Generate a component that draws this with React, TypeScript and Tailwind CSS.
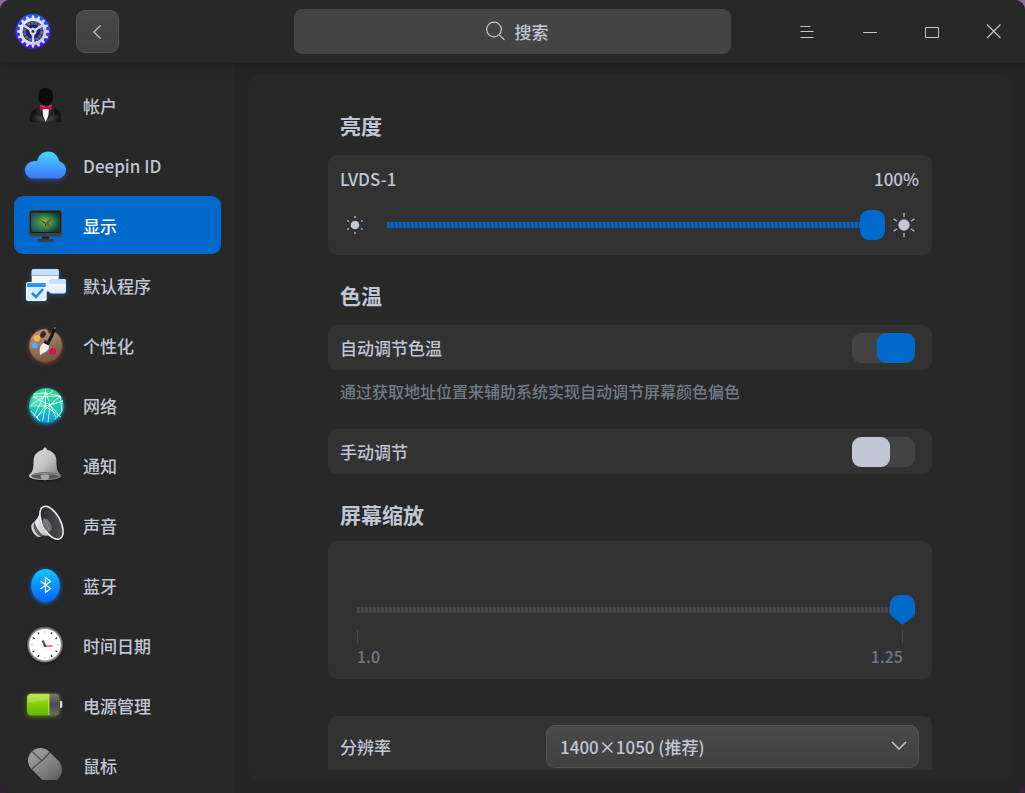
import { useState } from 'react'
import type { ReactNode } from 'react'

/* ---------- Sidebar icons ---------- */

function AccountIcon() {
  return (
    <>
      <defs>
        <radialGradient id="suit" cx="0.5" cy="0.7" r="0.5">
          <stop offset="0" stopColor="#5a5a5a" />
          <stop offset="1" stopColor="#111" />
        </radialGradient>
      </defs>
      <path d="M8 41v-4c0-6 3-9 9-10h14c6 1 8 4 8 10v4z" fill="url(#suit)" />
      <ellipse cx="23.7" cy="15.5" rx="7.5" ry="8.8" fill="#0b0b0b" />
      <path d="M16 26l5 2 2.7 13-9-10zM31 26l-5 2-2.300 13 9-10z" fill="#262626" />
      <path d="M20.500 28h6.500l-.7 7-2.600 6-2.600-6z" fill="#f2f2f2" />
      <path d="M18 24l5 1.500h1.500l5.500-1.500v5l-5.500-1H23l-5 1z" fill="#c2094f" />
      <path d="M18.500 24.500l4 1.200M29.500 24.500l-4 1.200" stroke="#f0568c" strokeWidth="0.8" />
    </>
  )
}

function CloudIcon() {
  return (
    <>
      <defs>
        <linearGradient id="cloud" x1="0" y1="0" x2="0" y2="1">
          <stop offset="0" stopColor="#43d7fb" />
          <stop offset="0.5" stopColor="#43a6ff" />
          <stop offset="1" stopColor="#3d77ff" />
        </linearGradient>
      </defs>
      <path
        d="M12 37.500C6.500 37.500 3 33.500 3 29c0-5 4.500-9 9.500-9 1 0 2 .1 2.600.3C16.500 14.500 20.500 10.500 26 10.500c5.500 0 9.500 3.300 11.200 9.500 4.200 1.500 6.800 4.800 6.800 8.700 0 5-4 8.800-9 8.800z"
        fill="url(#cloud)"
        className="drop-shadow-[0_2px_2px_#2f5fd088]"
      />
    </>
  )
}

function DisplayIcon() {
  return (
    <>
      <defs>
        <radialGradient id="screen" cx="0.45" cy="0.5" r="0.6">
          <stop offset="0" stopColor="#a4c91c" />
          <stop offset="0.4" stopColor="#4a9535" />
          <stop offset="0.8" stopColor="#1c5648" />
          <stop offset="1" stopColor="#153c2a" />
        </radialGradient>
      </defs>
      <path d="M20 34h7v5h-7z" fill="#20282e" />
      <rect x="15" y="38" width="17" height="2.800" rx="1" fill="#3a3d42" />
      <rect x="7" y="9" width="33" height="26.500" rx="3" fill="#3f4145" />
      <rect x="8" y="10" width="31" height="22" rx="2.500" fill="#15201d" />
      <rect x="9" y="11.500" width="29" height="19.500" rx="1.500" fill="url(#screen)" />
      <path d="M9 13c0-1 .5-1.500 1.500-1.500h6L24 31H10.500C9.500 31 9 30.500 9 29.500z" fill="#2a6a70" opacity="0.4" />
      <path d="M18.500 19l5 2.500 6.500-5-3 6 1.500 4-4-3z" fill="#5d5a6c" />
      <path d="M20 20l3 2.500 1 3" stroke="#18321f" strokeWidth="1" fill="none" />
    </>
  )
}

function DefaultAppsIcon() {
  return (
    <>
      <defs>
        <linearGradient id="page" x1="0" y1="0" x2="0" y2="1">
          <stop offset="0" stopColor="#fff" />
          <stop offset="1" stopColor="#dde9fb" />
        </linearGradient>
      </defs>
      <g className="drop-shadow-[0_1px_2px_#1e6fb8aa]">
        <rect x="9.700" y="8" width="27" height="22.500" rx="2" fill="url(#page)" />
        <path d="M9.700 14.500V10c0-1.100.9-2 2-2h23c1.100 0 2 .9 2 2v4.500z" fill="#c4dfff" />
        <path d="M9.700 14.500h27" stroke="#8fa6c0" strokeWidth="0.8" />
        <rect x="27.300" y="18" width="16.700" height="14.500" rx="2" fill="url(#page)" />
        <path d="M27.300 23V20c0-1.100.9-2 2-2H42c1.100 0 2 .9 2 2v3z" fill="#c4dfff" />
        <rect x="4" y="21" width="20.700" height="19" rx="2" fill="#f4f8ff" />
        <rect x="5.300" y="25.700" width="18" height="13" fill="#d9ebff" />
        <path d="M5 22h18.700v4H5z" fill="#2696fb" />
        <path d="M10 32l4 4 7-8" fill="none" stroke="#138bf5" strokeWidth="2.500" />
      </g>
    </>
  )
}

function PaletteIcon() {
  return (
    <>
      <defs>
        <linearGradient id="wood" x1="0.2" y1="0" x2="0.6" y2="1">
          <stop offset="0" stopColor="#b39a83" />
          <stop offset="1" stopColor="#74523f" />
        </linearGradient>
      </defs>
      <path
        d="M23.700 8C14 8 7.200 15.500 7.200 24.500S14.500 41 23.700 41s16.500-7 16.500-16.500c0-6-3-11-7.500-13.700-3-1.300-3.200 2-5.200 1.700C25.500 12 27 8.200 23.700 8z"
        fill="url(#wood)"
        stroke="#8e4527"
        strokeWidth="0.6"
        className="drop-shadow-[0_1px_2px_#b4532a88]"
      />
      <ellipse cx="21" cy="13.500" rx="2.600" ry="3.500" fill="#3d2820" transform="rotate(25 21 13.500)" />
      <circle cx="15" cy="17.300" r="3.200" fill="#f6b73c" />
      <circle cx="12.700" cy="24.500" r="3" fill="#57a8f8" />
      <circle cx="30.700" cy="30.300" r="3.200" fill="#e00a46" />
      <path d="M32 7l1-2 1 2-1 3-5 11-2-1z" fill="#151515" stroke="#151515" strokeWidth="1" />
      <circle cx="32.800" cy="7" r="0.900" fill="#8c8c8c" />
      <path d="M22 21.500l5 3c.5 3-1.500 5.500-4 6.700-2 .9-3 1.300-5 3.300 0-3.500-1-6 .5-9 1-2 2-3 3.500-4z" fill="#f1ede8" />
      <path d="M23 19l5 2.500-1.200 3-5.300-2.500z" fill="#1c1c1c" />
    </>
  )
}

function NetworkIcon() {
  return (
    <>
      <defs>
        <linearGradient id="globe" x1="0" y1="0" x2="0" y2="1">
          <stop offset="0" stopColor="#33dc8c" />
          <stop offset="0.6" stopColor="#1cc5b5" />
          <stop offset="1" stopColor="#0e92e6" />
        </linearGradient>
      </defs>
      <circle cx="24.300" cy="24.500" r="17.200" fill="url(#globe)" className="drop-shadow-[0_1px_2px_#12a0b0]" />
      <path d="M12 13l11-3v15L9 24z" fill="#7fe8c8" opacity="0.5" />
      <path
        d="M23.500 8v17M23.500 12l-12 1M23.500 12l14.500 3M23.500 12L12 35M23.500 12l10 24M11 16l27-1M11 16l17 8 13-4M38 15L15 36M7.500 25h16l17.500-5M15 36l8-11 16 11M23.500 25l-3 15M28 24l-2 17M28 24l8 9M38 15l2 15-7 8M9 30l9 10M31 10L9 24"
        fill="none"
        stroke="#e4fff6"
        strokeWidth="0.9"
        opacity="0.9"
      />
      <g fill="#fff">
        <circle cx="23.500" cy="12" r="1.200" />
        <circle cx="28" cy="24" r="1" />
        <circle cx="15" cy="36" r="1.100" />
        <circle cx="38" cy="16" r="1" />
        <circle cx="23.500" cy="25" r="1" />
      </g>
    </>
  )
}

function BellIcon() {
  return (
    <>
      <defs>
        <linearGradient id="bell" x1="0" y1="0" x2="1" y2="1">
          <stop offset="0" stopColor="#dcdcdc" />
          <stop offset="0.5" stopColor="#c4c4c4" />
          <stop offset="1" stopColor="#6c6c6c" />
        </linearGradient>
      </defs>
      <path
        d="M20.500 9c.8-.8 1.500-2.700 2.500-2.700s1.700 1.900 2.500 2.700c6 1.300 9 5.500 9 11.500 0 6 .5 9 2.500 11.500 1.300 1.300 2 2 2 3 0 2.500-7 4-16 4S7 37.500 7 35c0-1 .7-1.700 2-3 2-2.500 2.500-5.500 2.500-11.500 0-6 3-10.200 9-11.500z"
        fill="url(#bell)"
        className="drop-shadow-[0_1px_1px_#0008]"
      />
      <ellipse cx="23" cy="34.800" rx="14" ry="3.500" fill="#565656" />
      <path d="M9 34.500c2-2.500 26-2.500 28 0" stroke="#a9a9a9" strokeWidth="0.8" fill="none" />
      <path d="M18.500 34.500c0-1.500 9-1.500 9 0 0 3-2 4.700-4.500 4.700s-4.500-1.700-4.500-4.700z" fill="#a6a6a6" />
    </>
  )
}

function SoundIcon() {
  return (
    <>
      <defs>
        <linearGradient id="cone" x1="0" y1="0" x2="1" y2="0">
          <stop offset="0" stopColor="#f0f0f0" />
          <stop offset="1" stopColor="#8d8d8d" />
        </linearGradient>
        <linearGradient id="coneInner" x1="0" y1="0" x2="1" y2="1">
          <stop offset="0" stopColor="#202224" />
          <stop offset="1" stopColor="#55575c" />
        </linearGradient>
      </defs>
      <ellipse cx="15" cy="28.500" rx="5" ry="8" fill="#cfcfda" transform="rotate(-28 15 28.500)" />
      <ellipse cx="17" cy="28" rx="4.500" ry="8" fill="#5c5c62" transform="rotate(-28 17 28)" />
      <path d="M19 6c-1 7-3 11-6.500 14.500C14 27 18 32 22 34.500c6 0 10 2 14.500 4.500z" fill="url(#cone)" />
      <ellipse
        cx="29.500"
        cy="21.800"
        rx="9"
        ry="18"
        fill="url(#coneInner)"
        stroke="#f2f2f2"
        strokeWidth="1.500"
        transform="rotate(-28 29.500 21.800)"
      />
      <ellipse cx="25" cy="24" rx="4" ry="7" fill="#6d6f73" transform="rotate(-28 25 24)" />
      <path d="M21.500 17.500c3 3 5 8 5.500 13" stroke="#94969a" strokeWidth="0.700" fill="none" />
    </>
  )
}

function BluetoothIcon() {
  return (
    <>
      <defs>
        <linearGradient id="bt" x1="0" y1="0" x2="0" y2="1">
          <stop offset="0" stopColor="#15c3ff" />
          <stop offset="1" stopColor="#0266ff" />
        </linearGradient>
      </defs>
      <ellipse cx="23.500" cy="24.300" rx="14.300" ry="16.400" fill="url(#bt)" className="drop-shadow-[0_1px_2px_#0a7cff]" />
      <path d="M18.500 20l10 7.500-5 4v-15l5 4-10 7.500" fill="none" stroke="#fff" strokeWidth="1.200" />
    </>
  )
}

const clockTicks = [0, 30, 60, 90, 120, 150, 180, 210, 240, 270, 300, 330]

function ClockIcon() {
  return (
    <>
      <circle cx="23" cy="23.700" r="18" fill="#5f5f5f" className="drop-shadow-[0_1px_1px_#0008]" />
      <circle cx="23" cy="23.700" r="17" fill="#8d8d8d" />
      <circle cx="23" cy="23.700" r="15.800" fill="#fff" />
      {clockTicks.map((angle) => (
        <path
          key={angle}
          d="M23 9.500v2.200"
          stroke={angle % 90 === 0 ? '#d0d0d0' : '#222'}
          strokeWidth="1.200"
          transform={`rotate(${angle} 23 23.700)`}
        />
      ))}
      <path d="M23 25l-2.300-5.500" stroke="#555" strokeWidth="2.200" />
      <path d="M22.500 25h8" stroke="#ff5a55" strokeWidth="1.600" />
      <circle cx="23" cy="24.800" r="1.100" fill="#333" />
    </>
  )
}

function BatteryIcon() {
  return (
    <>
      <defs>
        <linearGradient id="charge" x1="0" y1="0" x2="0" y2="1">
          <stop offset="0" stopColor="#b6e23c" />
          <stop offset="0.5" stopColor="#84cc10" />
          <stop offset="1" stopColor="#62b800" />
        </linearGradient>
        <linearGradient id="shell" x1="0" y1="0" x2="0" y2="1">
          <stop offset="0" stopColor="#7a7a7a" />
          <stop offset="0.5" stopColor="#4c4c4c" />
          <stop offset="1" stopColor="#686868" />
        </linearGradient>
      </defs>
      <g className="drop-shadow-[0_1px_2px_#78b400aa]">
        <rect x="5" y="12.700" width="32.300" height="21.500" rx="4" fill="url(#shell)" />
        <path d="M9 12.700h18.300v21.500H9c-2.200 0-4-1.800-4-4V16.700c0-2.200 1.800-4 4-4z" fill="url(#charge)" />
        <path d="M6 21.500v-4.800c0-1.700 1.300-3 3-3h17.300v5z" fill="#cdec70" opacity="0.4" />
        <path d="M26.800 13v21" stroke="#c9ef5c" strokeWidth="0.800" />
      </g>
      <path d="M38 20h1c.7 0 1.200.5 1.200 1.200v4.600c0 .7-.5 1.200-1.200 1.200h-1z" fill="#dcdcdc" />
    </>
  )
}

function MouseIcon() {
  return (
    <>
      <defs>
        <linearGradient id="mouse" gradientUnits="userSpaceOnUse" x1="10" y1="8" x2="36" y2="40">
          <stop offset="0" stopColor="#a0a0a0" />
          <stop offset="0.5" stopColor="#868686" />
          <stop offset="1" stopColor="#5d5d5d" />
        </linearGradient>
      </defs>
      <path d="M18.500 19.500l9 9" stroke="url(#mouse)" strokeWidth="25" strokeLinecap="round" />
      <path d="M10.300 10.500l9.500 9.200M9.500 28.800c3-3.500 6.500-6 10.300-9.100 3.500-3 6-5.700 8.200-8.700" stroke="#505050" strokeWidth="1.300" fill="none" />
    </>
  )
}

/* ---------- Data ---------- */

interface NavItem {
  id: string
  label: string
  icon: ReactNode
}

const navItems: NavItem[] = [
  { id: 'accounts', label: '帐户', icon: <AccountIcon /> },
  { id: 'deepin-id', label: 'Deepin ID', icon: <CloudIcon /> },
  { id: 'display', label: '显示', icon: <DisplayIcon /> },
  { id: 'default-apps', label: '默认程序', icon: <DefaultAppsIcon /> },
  { id: 'personalization', label: '个性化', icon: <PaletteIcon /> },
  { id: 'network', label: '网络', icon: <NetworkIcon /> },
  { id: 'notification', label: '通知', icon: <BellIcon /> },
  { id: 'sound', label: '声音', icon: <SoundIcon /> },
  { id: 'bluetooth', label: '蓝牙', icon: <BluetoothIcon /> },
  { id: 'datetime', label: '时间日期', icon: <ClockIcon /> },
  { id: 'power', label: '电源管理', icon: <BatteryIcon /> },
  { id: 'mouse', label: '鼠标', icon: <MouseIcon /> },
]

/* ---------- Header ---------- */

const gearTeeth = Array.from({ length: 16 }, (_, i) => i * 22.5)

function Logo() {
  return (
    <svg viewBox="0 0 36 36" className="size-9 shrink-0" aria-hidden="true">
      <defs>
        <linearGradient id="logo" x1="0" y1="0" x2="0" y2="1">
          <stop offset="0" stopColor="#2c5bfb" />
          <stop offset="1" stopColor="#4311d6" />
        </linearGradient>
        <linearGradient id="gear" x1="0" y1="0" x2="1" y2="1">
          <stop offset="0" stopColor="#f2f3fb" />
          <stop offset="1" stopColor="#bfc3de" />
        </linearGradient>
      </defs>
      <g transform="translate(0 -0.5)">
        <circle cx="18" cy="18" r="17.500" fill="url(#logo)" />
        {gearTeeth.map((angle) => (
          <path key={angle} d="M17 2h2l.8 4h-3.600z" fill="#dde0f2" transform={`rotate(${angle} 18 18)`} />
        ))}
        <circle cx="18" cy="18" r="12" fill="#1d2270" stroke="url(#gear)" strokeWidth="3" />
        <circle cx="18" cy="18" r="8.600" fill="none" stroke="#5d6a86" strokeWidth="3" strokeDasharray="3 0.800" />
        <path d="M18 18L7.500 11M18 18l10.500-7M18 18v12" stroke="#ccd0e6" strokeWidth="2.400" />
        <path d="M18 14l4 2-1 4-3 3-3-3-1-4z" fill="#d6d9ec" />
        <circle cx="18" cy="18" r="1.400" fill="#232a70" />
      </g>
    </svg>
  )
}

function WindowButton({ label, children }: { label: string; children: ReactNode }) {
  return (
    <button type="button" aria-label={label} className="flex h-full w-[62px] items-center justify-center hover:bg-white/5">
      <svg viewBox="0 0 20 20" className="size-5" fill="none" stroke="currentColor" strokeWidth="1">
        {children}
      </svg>
    </button>
  )
}

function Header() {
  return (
    <header className="relative z-10 grid h-[63px] shrink-0 grid-cols-[1fr_minmax(0,437px)_1fr] items-center bg-[#282828] shadow-[0_2px_14px_#0003]">
      <div className="flex items-center gap-[25px] pl-[15px]">
        <Logo />
        <button
          type="button"
          aria-label="返回"
          className="flex size-[43px] items-center justify-center rounded-[9px] border border-[#555] bg-linear-to-b from-[#484848] to-[#404040]"
        >
          <svg viewBox="0 0 20 20" className="size-5" fill="none" stroke="currentColor" strokeWidth="1.300">
            <path d="M12.500 3.500L6 10l6.500 6.500" />
          </svg>
        </button>
      </div>

      <label className="flex h-[45px] items-center justify-center gap-2 rounded-lg bg-[#444] pl-2">
        <svg viewBox="0 0 22 22" className="size-[22px]" fill="none" stroke="currentColor" strokeWidth="1.200">
          <circle cx="9" cy="8.500" r="7.300" />
          <path d="M14.300 13.800l5.200 5.200" />
        </svg>
        <input
          type="text"
          aria-label="搜索"
          placeholder="搜索"
          className="field-sizing-content bg-transparent outline-none placeholder:text-[#c0c6d4]"
        />
      </label>

      <div className="flex h-full justify-end">
        <WindowButton label="菜单">
          <path d="M2.500 4.500h10M2.500 9.500h13M2.500 15.500h13" />
        </WindowButton>
        <WindowButton label="最小化">
          <path d="M3 10.500h14" />
        </WindowButton>
        <WindowButton label="最大化">
          <path d="M3.500 5.500h13v10h-13z" />
        </WindowButton>
        <WindowButton label="关闭">
          <path d="M3 2.500l13.500 13.500M16.500 2.500L3 16" strokeWidth="1.200" />
        </WindowButton>
      </div>
    </header>
  )
}

/* ---------- Sidebar ---------- */

function Sidebar() {
  const [active, setActive] = useState('display')

  return (
    <nav className="w-[235px] shrink-0 bg-[#282828] px-[14px] pt-[13px] pb-[13px]">
      <ul className="flex h-full flex-col gap-[2px] overflow-hidden">
        {navItems.map((item) => (
          <li key={item.id} className="shrink-0">
            <button
              type="button"
              onClick={() => setActive(item.id)}
              className={
                item.id === active
                  ? 'flex h-[58px] w-full items-center gap-[13px] rounded-[9px] bg-[#0069cc] px-2 text-white'
                  : 'flex h-[58px] w-full items-center gap-[13px] rounded-[9px] px-2'
              }
            >
              <svg viewBox="0 0 48 48" className="size-12 shrink-0" aria-hidden="true">
                {item.icon}
              </svg>
              <span>{item.label}</span>
            </button>
          </li>
        ))}
      </ul>
    </nav>
  )
}

/* ---------- Display page ---------- */

function Sun({ size }: { size: 'small' | 'large' }) {
  const rays = size === 'small' ? 'M12 3v2M12 19v2' : 'M12 0v4M12 20v4'
  return (
    <svg viewBox="0 0 24 24" className="size-6 shrink-0" fill="currentColor" stroke="currentColor" aria-hidden="true">
      <circle cx="12" cy="12" r={size === 'small' ? 4.3 : 5.7} stroke="none" />
      {[0, 60, 120].map((angle) => (
        <path key={angle} d={rays} strokeWidth="1.300" transform={`rotate(${angle} 12 12)`} />
      ))}
    </svg>
  )
}

function SwitchRow({ id, label, on }: { id: string; label: string; on?: boolean }) {
  return (
    <div className="flex h-[45px] items-center justify-between rounded-[9px] bg-[#323232] pr-[17px] pl-3">
      <label htmlFor={id}>{label}</label>
      <input
        id={id}
        type="checkbox"
        role="switch"
        defaultChecked={on}
        className="h-[30px] w-[63px] appearance-none rounded-[9px] bg-[#444] before:block before:h-[30px] before:w-[38px] before:rounded-[9px] before:bg-[#c0c6d4] checked:before:ml-[25px] checked:before:bg-[#0069cc]"
      />
    </div>
  )
}

function DisplayPage() {
  const [brightness, setBrightness] = useState(100)

  return (
    <div className="mx-auto w-full max-w-[604px] pt-9">
      {/* Brightness */}
      <h2 className="pl-3 text-[21px] leading-7 font-bold">亮度</h2>
      <div className="mt-4 h-[100px] rounded-[9px] bg-[#323232] pt-[11px]">
        <div className="flex justify-between pr-[13px] pl-3">
          <label htmlFor="brightness">LVDS-1</label>
          <span>{brightness}%</span>
        </div>
        <div className="mt-[19px] flex items-center pr-4 pl-[15px]">
          <Sun size="small" />
          <input
            id="brightness"
            type="range"
            min={0}
            max={100}
            value={brightness}
            onChange={(e) => setBrightness(Number(e.target.value))}
            className="mr-[7px] ml-5 h-[30px] min-w-0 flex-1 appearance-none bg-transparent [&::-webkit-slider-runnable-track]:h-[6px] [&::-webkit-slider-runnable-track]:bg-[repeating-linear-gradient(90deg,#0069cc_0_2px,#0f5ca6_2px_3px,#2b435a_3px_4px)] [&::-webkit-slider-thumb]:-mt-3 [&::-webkit-slider-thumb]:h-[30px] [&::-webkit-slider-thumb]:w-[25px] [&::-webkit-slider-thumb]:appearance-none [&::-webkit-slider-thumb]:rounded-[9px] [&::-webkit-slider-thumb]:bg-[#0069cc]"
          />
          <Sun size="large" />
        </div>
      </div>

      {/* Color temperature */}
      <h2 className="mt-[26px] mb-4 pl-3 text-[21px] leading-7 font-bold">色温</h2>
      <SwitchRow id="auto-temperature" label="自动调节色温" on />
      <p className="mt-[9px] mb-[26px] pl-3 text-base leading-6 text-[#6d7c88]">
        通过获取地址位置来辅助系统实现自动调节屏幕颜色偏色
      </p>
      <SwitchRow id="manual-temperature" label="手动调节" />

      {/* Scaling */}
      <h2 className="mt-[26px] pl-3 text-[21px] leading-7 font-bold">屏幕缩放</h2>
      <div className="mt-[13px] h-[138px] rounded-[9px] bg-[#323232] pt-[54px] pr-[17px] pl-[29px]">
        <input
          type="range"
          aria-label="屏幕缩放"
          min={1}
          max={1.25}
          step={0.25}
          defaultValue={1.25}
          className="block h-[30px] w-full appearance-none bg-transparent [&::-webkit-slider-runnable-track]:h-[6px] [&::-webkit-slider-runnable-track]:bg-[repeating-linear-gradient(90deg,#4c4c4c_0_2px,#434343_2px_3px,#363636_3px_4px)] [&::-webkit-slider-thumb]:-mt-3 [&::-webkit-slider-thumb]:h-[30px] [&::-webkit-slider-thumb]:w-[25px] [&::-webkit-slider-thumb]:appearance-none [&::-webkit-slider-thumb]:rounded-t-[9px] [&::-webkit-slider-thumb]:bg-[#0069cc] [&::-webkit-slider-thumb]:[clip-path:polygon(0_0,100%_0,100%_66%,50%_100%,0_66%)]"
        />
        <div className="mt-[5px] mr-3 h-[13px] border-x border-[#4a4a4a]" />
        <div className="mt-px mr-3 flex justify-between text-base leading-6 text-[#6d7c88]">
          <span>1.0</span>
          <span>1.25</span>
        </div>
      </div>

      {/* Resolution */}
      <div className="mt-[37px] flex h-[61px] items-center justify-between rounded-t-[9px] bg-[#323232] pr-[13px] pl-3">
        <label htmlFor="resolution">分辨率</label>
        <div className="relative w-[373px]">
          <select
            id="resolution"
            className="block h-[43px] w-full appearance-none rounded-[9px] border border-[#555] bg-linear-to-b from-[#4a4a4a] to-[#404040] px-[13px]"
          >
            <option>1400×1050 (推荐)</option>
          </select>
          <svg
            viewBox="0 0 16 16"
            className="pointer-events-none absolute top-[13px] right-3 size-4"
            fill="none"
            stroke="currentColor"
            strokeWidth="1.500"
            aria-hidden="true"
          >
            <path d="M1 4l7 7 7-7" />
          </svg>
        </div>
      </div>
    </div>
  )
}

export default function App() {
  return (
    <div className="h-screen bg-linear-to-b from-[#8a6c99] to-[#3a1c3c]">
      <div className="flex h-full flex-col overflow-hidden rounded-[10px] bg-[#252525] font-['Noto_Sans_CJK_SC',sans-serif] text-[17px] leading-[25px] font-medium text-[#c0c6d4]">
        <Header />
        <div className="flex min-h-0 flex-1">
          <Sidebar />
          <main className="flex min-w-0 flex-1 flex-col pt-3 pr-[13px] pb-[13px] pl-[13px]">
            <div className="min-h-0 flex-1 rounded-[9px] bg-[#282828] pb-[10px]">
              <div className="h-full overflow-hidden">
                <DisplayPage />
              </div>
            </div>
          </main>
        </div>
      </div>
    </div>
  )
}
